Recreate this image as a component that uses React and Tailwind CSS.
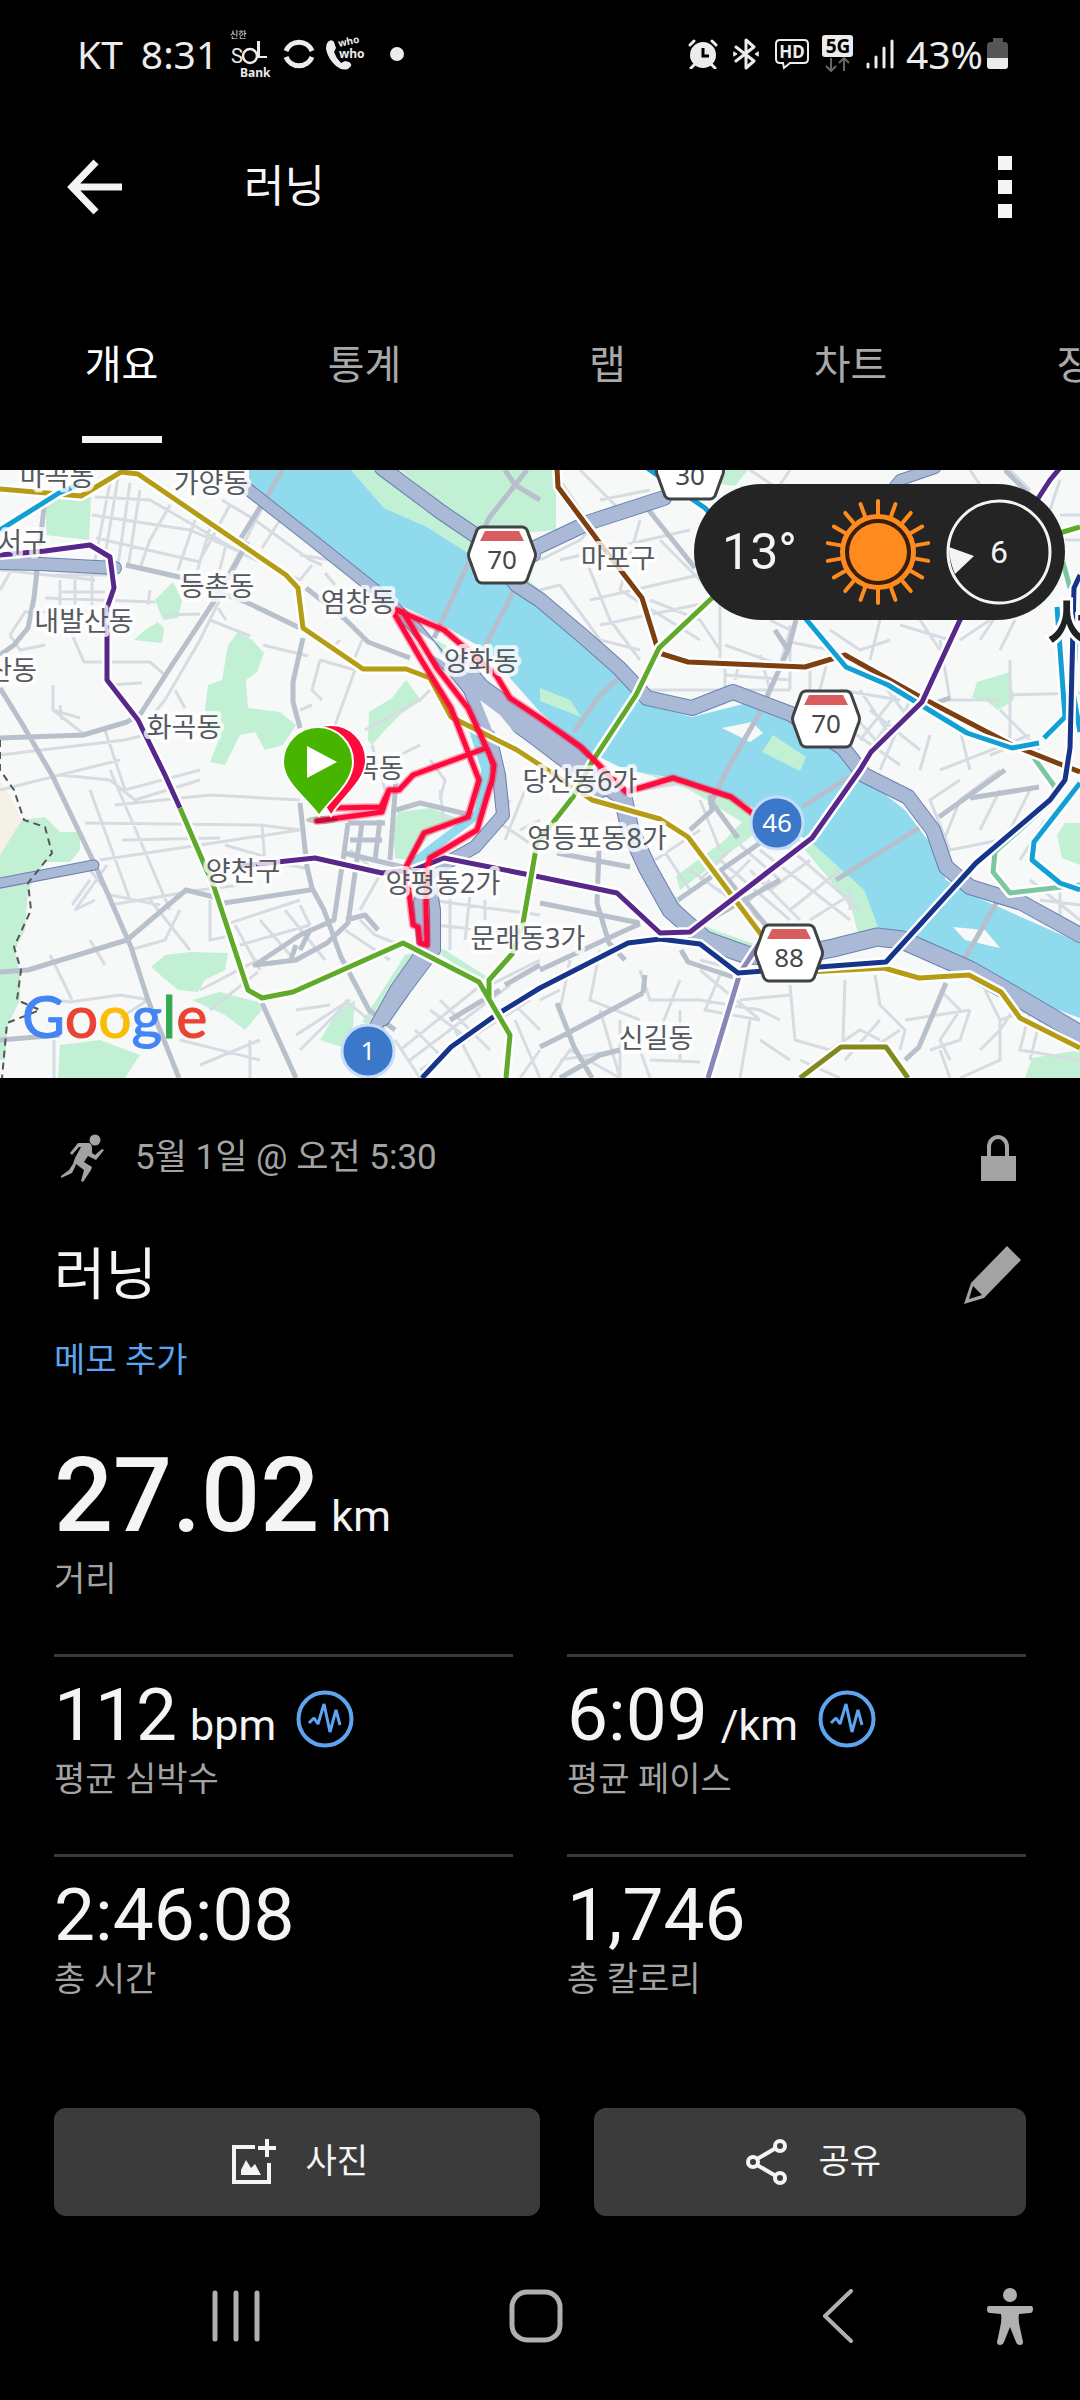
import { useState } from 'react'

const TABS = ['개요', '통계', '랩', '차트', '장비']

const STATS = [
  { value: '112', unit: 'bpm', label: '평균 심박수', chart: true },
  { value: '6:09', unit: '/km', label: '평균 페이스', chart: true },
  { value: '2:46:08', label: '총 시간' },
  { value: '1,746', label: '총 칼로리' },
]

/* ---------- map data ---------- */

const PARKS = [
  'M351 470L384 508L427 527L468 553L540 608V590L475 535L382 470Z',
  'M400 470H556V530L500 535L475 530Z',
  'M46 497H91L89 540L46 535Z',
  'M155 600L173 582L182 600L178 618L163 620Z',
  'M134 640L145 630L158 622L164 628L162 643Z',
  'M238 632L252 640L264 653L257 672L246 680L248 708L280 712L296 725L283 745L265 750L255 732L240 735L225 765L210 762L218 742L205 710L208 685L222 680L228 645Z',
  'M406 680L421 700L400 715L385 730L372 745L368 740L369 712L392 698Z',
  'M0 855L22 820L45 817L60 832H80V850L70 862H45L28 890L25 930L15 950L20 975V1000L8 1025L5 1060H0Z',
  'M151 967L165 955L190 952L228 953L225 970L205 980L198 992L178 990Z',
  'M192 1000L220 992L258 1002L262 1010L245 1030L225 1015Z',
  'M58 1078L60 1045L100 1040L140 1055L125 1078Z',
  'M355 1000L335 1015L320 1040L345 1048L352 1040Z',
  'M398 812L430 808L462 820L430 835L410 860L395 858L393 830Z',
  'M405 955L425 950L385 1030L362 1022Z',
  'M427 945L445 950L489 978L480 982Z',
  'M640 772L700 785L750 806L752 836L680 890L676 876L725 840L742 822L690 790Z',
  'M795 838L812 843L864 890L879 930L858 934L852 910L830 880Z',
  'M675 895L690 920L720 932L757 945L745 952L700 937L680 920Z',
  'M436 640L450 648L452 670L440 660Z',
  'M1025 1078L1032 1058L1080 1050V1078Z',
  'M1080 823H1065L1057 835L1062 858L1080 865Z',
  'M977 682L1010 672L1014 700L998 710L985 700L972 698Z',
  'M722 470H748L735 486L720 484Z',
]

const RIVER =
  'M249 470H351L384 508L427 527L468 553L540 608L609 665L640 703L692 717L747 703L791 722L840 748L860 775L905 810L933 847L946 880L967 893L1080 943V1018L970 977L902 937L879 930L864 890L812 843L750 806L733 797L667 777L626 770L585 750L540 712L510 678L482 648L448 628L406 608L375 592L310 540L249 492Z'

const ISLANDS = [
  { d: 'M540 688L570 700L581 717L540 701Z', fill: '#c2f0d4' },
  { d: 'M773 735L806 757L800 771L762 752Z', fill: '#c2f0d4' },
  { d: 'M722 728L752 722L763 733L750 742Z', fill: '#f7f8f8' },
  { d: 'M953 927L985 930L1000 948L965 940Z', fill: '#f7f8f8' },
]

const STREETS = [
  'M110 483L95 560M118 478L104 562M130 483L118 565M140 490L128 568M92 515L190 530L240 552M96 538L200 562M95 497L150 500M170 505L150 540L140 568M195 520L178 570M210 528L196 575',
  'M222 500L255 520L310 560L322 565M230 505L200 560M262 508L215 600M280 520L262 548M312 565L300 580M300 555L330 560M150 500L245 555L300 580',
  'M55 575H110M60 580V605M75 580V605M45 598L155 602M62 592H105M92 575V605M0 570L95 580M150 590L148 605M20 555L0 590',
  'M10 635L25 612H90M10 635L20 650L45 645M70 630L84 662L150 662L165 675M53 685V710L85 735M53 710L80 718M107 685L142 683M165 615L200 614',
  'M210 620L250 636M175 690L185 708M263 645L308 656M248 542L200 640L165 700L150 718M218 608L226 620M226 545L212 600',
  'M320 660L355 670L335 725L330 760M320 660L312 690L322 700M325 573L335 585M340 640L330 650M362 640L352 665M300 710L312 705M365 730L420 700L430 690',
  'M0 755L125 740L145 735M40 780L120 760M105 730L125 790L200 770M60 705L62 720M300 745L350 780L370 770M370 770L420 745M372 745L385 790',
  'M0 790L60 775L110 780L135 800L200 780M115 805L210 795L300 800M85 823L260 825L300 830M100 860L200 845L300 830M110 770L170 910M90 790L130 900M122 840L220 838M262 825L265 862M262 862L310 868M225 845L310 870',
  'M90 870L110 895L160 905M55 1000L70 1002L120 995L150 1000M50 955L60 975L72 1000M90 940L105 965M72 905L90 880M130 950L165 940L180 910M150 900L190 950M107 865L75 910L95 900M110 905L200 890L240 885M210 900V940L235 935',
  'M224 925L300 900M235 925L260 970M260 920L290 955M285 910L325 960M240 945L310 925M310 925L300 905M345 930L390 960M360 920L375 935L400 945M350 850L380 875L360 910M258 960L200 990M258 972L210 1010',
  'M296 1035L350 1000M296 1010L330 1005M300 1050L330 1020L350 1000M180 1040L260 1060M200 1065L260 1040M250 1040V1078M54 1040V1078M148 1000L120 1018M345 1000L375 1025',
  'M400 1050L500 970M410 1060L510 985M420 1070L530 1000M430 1010L470 1040M440 1000L490 1050M395 1040L420 1078M455 1030L480 1078M510 1000L540 1030M515 1020L540 1078M520 1078L540 1050M480 990L540 960M415 1030L445 1060',
  'M430 900L540 915M435 925L530 935M450 890V950M470 895L465 940M485 900V920M495 820L540 850M510 800L495 830M525 790L505 840M520 830L540 820M440 790L445 830M430 760L445 780L440 800',
  'M560 480L600 540M580 470L620 510L700 490M600 500L650 490M540 590L560 585L600 640L640 650M580 545L610 620L640 660M560 560L690 530M590 600L720 570M600 625L720 600M660 540L720 600M640 520L620 590L700 640M720 600V660M650 600L700 620L720 650M540 560L580 540L600 520',
  'M770 620L790 630L780 665M790 625V690M725 675L790 680M725 665V690M760 655L770 690M740 660L735 680M810 660V700M640 690L790 690M780 640L830 650L820 690M725 645L780 665',
  'M830 630L860 650L890 640M880 620L870 660M900 625L950 640M920 620L940 650M940 640L950 700L1000 700M1010 660V750M1010 695L1080 693M960 640L990 620M900 690L860 740M880 680L910 720M870 710L920 750M850 730L900 765M890 720L870 750M910 700L880 770M840 690L900 700M930 735L920 770M960 730L970 770M860 690L890 735M840 700L880 745',
  'M980 640L1000 610L1050 590M1000 710L1040 750M990 755L1030 740M940 770L1030 735M1010 470L1030 490M970 470L990 500M750 470L780 490M790 470L770 500M1060 480L1050 510M1060 515H1080M1065 540H1080M1015 620L1000 650',
  'M640 790L700 780M700 800L720 850M650 830L690 890M655 860L700 830M690 870L760 920M700 880L730 850M720 890L750 860M740 910L770 880M760 850L850 920M780 840L860 910M750 870L800 920M770 890L810 860M790 910L840 870M810 920L850 895M720 860L790 920M740 845L780 880M850 890V910',
  'M700 960L780 980M700 970L760 1020M720 975L705 1010L760 1020M740 1000L790 995M790 985L795 1040L830 1050M845 980L843 1040M875 975L880 1005L905 1030L900 1050M905 1020L970 1010M900 1030L870 1050M880 1020L845 1060M940 990L960 1010L940 1040L950 1060M985 990L1000 1020M970 1010L960 1040L930 1050',
  'M540 1000L560 990M570 960L560 1010M600 950L590 1000L640 1020M640 970L650 1000L700 1000M680 980L660 1030M560 1060L620 1050M600 1010L620 1078M620 1020V1078M640 1050L650 1078M680 1010V1060M650 1060L700 1062M550 1078L570 1050L620 1078M700 1000L760 1010L780 1020M750 1020L740 1078M760 1040L790 1060',
  'M830 1050L860 1030L880 1040M800 1060L840 1078M940 1050L950 1078M1000 1020L1030 1010L1020 1050L1080 1060M1000 1020V1060L960 1078M1020 1000L1000 1030L980 1050M1040 1020L1030 1060M1000 770L960 800L940 850M960 780L930 800L950 850L1000 840M1000 790L980 830M1030 790L1010 830M1045 820L1020 860M1030 880L1080 920M1060 890V915M1040 900L1080 905',
]

const ROADS = [
  'M0 738L83 735L127 722L141 713L172 665L213 603L248 542',
  'M126 565L179 577L248 603L300 628M303 638L293 682V702L300 728',
  'M300 803L307 867L312 888L324 910L341 957L369 1010L395 1030',
  'M0 688L21 722L52 775L96 867L131 947L148 1000L179 1078',
  'M0 972L28 970L127 940L186 890L214 897M224 903L310 890L312 888',
  'M348 823L344 853L334 920L300 935L255 965L296 960L327 943L348 923L362 823',
  'M310 930L300 950M296 945L290 962M344 853L403 867M396 780L390 860M380 820L375 860M348 823H385M350 840H382',
  'M396 810L420 803L479 817M262 1003L296 1078M346 920L365 915L378 930',
  'M45 498L34 598L28 628L14 645L0 655M0 1040L60 1035',
  'M306 588L344 618L368 642L410 658',
  'M505 470L515 485L540 500M1005 470L1035 500',
  'M647 508L695 568M540 970L626 930L640 924M540 903L640 923M557 853L630 867M599 850L597 903L609 943L625 960',
  'M540 1047L568 1033L643 993M557 1003L574 1047L592 1078M560 1078L600 1055L620 1050M643 993L645 975',
  'M946 983L919 1047L905 1060M681 950L688 962L733 977',
  'M678 900L760 843M700 925L780 880M720 870L770 930M1005 770L967 797L939 817M970 798L1039 787M710 800L738 838M690 830L712 810L710 795',
  'M935 703L950 698M505 985L540 965M450 1020L500 990',
]

const BRIDGES = [
  'M527 470L489 518L434 638', 'M517 585L482 652', 'M282 470L272 488L241 538', 'M796 620L788 650L760 712L726 772L710 805',
  'M619 678L600 695L574 732', 'M860 770L802 807', 'M919 828L836 880', 'M998 900L964 960', 'M775 630L788 650',
]

const HIGHWAYS = [
  { d: 'M245 487L310 538L375 590L413 625L444 662L478 690', w: 11 },
  { d: 'M460 668L478 690L540 735L570 758L600 785', w: 24 },
  { d: 'M600 780L623 797L630 830L647 867L671 910L705 940L747 955L789 957L833 948L877 937L902 940L970 970L1005 990L1080 1034', w: 17 },
  { d: 'M382 468L441 512L475 535L517 585L540 600L585 638L619 668L647 698L692 708L733 692L791 714L843 748L864 775L908 797L933 830L946 867L970 887L1022 903L1080 935', w: 14 },
  { d: 'M535 548L590 522L664 498', w: 14 },
  { d: 'M534 555L520 562', w: 12 },
  { d: 'M890 492L900 480L935 468', w: 10 },
  { d: 'M466 680L479 712L492 745L499 775L503 815L475 847L430 872L420 903L424 950L396 990L374 1030', w: 12 },
  { d: 'M430 880L435 910V950L405 990L384 1020', w: 10 },
  { d: 'M-5 563L40 564L115 568', w: 12 },
  { d: 'M-5 884L94 865', w: 9 },
]

const METRO = [
  { c: '#8a86b8', d: 'M768 930L740 973L708 1078' },
  { c: '#7cc6a0', d: 'M1034 758L1055 787L1050 803L995 852L993 872L1010 893L1080 885M1063 562L1070 588' },
  { c: '#b49c14', d: 'M0 489L81 496L121 472L138 474L286 575L298 588L303 628L363 669H406L430 678L451 717L517 750L540 765L592 800L660 819L688 837L760 933L789 973L884 968L919 978L969 975L1001 992L1020 1018L1080 1048' },
  { c: '#838a1c', d: 'M800 1078L841 1047H886L908 1078' },
  { c: '#7d3f10', d: 'M557 468L558 487L599 542L642 598L659 653L688 662L805 667L845 655L922 698L1012 745L1080 772' },
  { c: '#119fd6', d: 'M0 530L59 493L80 484M647 468L705 508L805 618L846 667L888 685L967 733L1012 748L1039 743M1044 738L1065 717L1057 607M1076 638L1073 692L1080 732M1080 783L1034 842L1032 860L1060 883L1080 890' },
  { c: '#15348a', d: 'M422 1078L451 1047L496 1015L540 988L628 943L660 939L700 944L738 973L886 962L976 863L1050 800L1065 780L1070 748L1074 588L1080 575' },
  { c: '#57278a', d: 'M0 555L45 551L90 545L110 557L114 588L107 608V680L138 720L165 775L180 808M240 866L315 858L382 873L413 870L444 858L540 877L617 893L660 933L690 932L812 838L860 770L871 752L922 702L960 620L1039 497L1050 480L1060 468' },
  { c: '#5faa2a', d: 'M180 808L214 887L248 990L262 998L293 992L403 943L479 982L510 1035L506 1078M489 1000V980L513 953L523 923L537 843L573 797L592 762L636 695L659 648L712 598L1063 532L1080 527' },
]

const ROUTE =
  'M317 821L382 812L389 790H399L413 775L486 748L482 738L468 708L437 668L403 612L396 610L444 630L465 648L496 675L510 698L540 718L581 747L626 792L673 778L731 797L756 816M394 613L420 658L451 708L477 775L479 780L468 817L424 833L406 867L413 925L418 927L420 943L427 945L426 903L427 867L430 858L477 830L492 780L494 765L482 738M334 808L381 807L389 790'

const LABELS = [
  { t: '마곡동', x: 57, y: 486 }, { t: '가양동', x: 211, y: 493 }, { t: '서구', x: 22, y: 552 },
  { t: '등촌동', x: 217, y: 596 }, { t: '내발산동', x: 84, y: 631 }, { t: '산동', x: 12, y: 680 },
  { t: '염창동', x: 358, y: 612 }, { t: '양화동', x: 481, y: 671 }, { t: '화곡동', x: 184, y: 737 },
  { t: '목동', x: 379, y: 778 }, { t: '양천구', x: 243, y: 881 }, { t: '양평동2가', x: 443, y: 893 },
  { t: '문래동3가', x: 528, y: 948 }, { t: '당산동6가', x: 580, y: 791 }, { t: '영등포동8가', x: 597, y: 848 },
  { t: '신길동', x: 656, y: 1048 }, { t: '마포구', x: 618, y: 568 },
]

const SHIELDS = [
  { n: 30, x: 690, y: 471 }, { n: 70, x: 502, y: 555 }, { n: 70, x: 826, y: 719 }, { n: 88, x: 789, y: 953 },
]

const GOOGLE = [
  ['G', '#4285f4'], ['o', '#ea4335'], ['o', '#fbbc05'], ['g', '#4285f4'], ['l', '#34a853'], ['e', '#ea4335'],
]

function RouteMap() {
  return (
    <svg viewBox="0 470 1080 608" className="block w-full" role="img" aria-label="지도">
      <rect y="470" width="1080" height="608" fill="#f7f8f8" />
      <path d="M0 780L12 800L27 830L15 850L0 860Z" fill="#f6f1e6" />
      <path d={PARKS.join('')} fill="#c2f0d4" />
      <path d={STREETS.join('')} fill="none" stroke="#d7dce3" strokeWidth="3" />
      <path d={ROADS.join('')} fill="none" stroke="#b8c0cc" strokeWidth="5" strokeLinejoin="round" />
      <path d={RIVER} fill="#90daee" />
      {ISLANDS.map((s) => <path key={s.d} d={s.d} fill={s.fill} />)}
      <path d="M472 725L486 770L479 813L434 847L410 866" fill="none" stroke="#90daee" strokeWidth="9" />
      <path d={BRIDGES.join('')} fill="none" stroke="#b6bfcb" strokeWidth="5" />
      {HIGHWAYS.map((h) => (
        <path key={h.d} d={h.d} fill="none" stroke="#6b80b0" strokeWidth={h.w + 2} strokeLinecap="round" strokeLinejoin="round" />
      ))}
      {HIGHWAYS.map((h) => (
        <path key={h.d} d={h.d} fill="none" stroke="#a9b9d6" strokeWidth={h.w} strokeLinecap="round" strokeLinejoin="round" />
      ))}
      <path d="M480 700L492 730L530 752L500 715Z" fill="#f7f8f8" />
      <path d="M414 628L432 655L448 664L434 642Z" fill="#f7f8f8" />
      <path d="M0 740V770L14 790L24 820L45 827L52 853L28 883L31 910L14 947L21 970L17 1000L40 1010L7 1023L2 1078" fill="none" stroke="#555" strokeWidth="2" strokeDasharray="7 5" />

      {METRO.map((m) => (
        <g key={m.c} fill="none" strokeLinejoin="round">
          <path d={m.d} stroke="#fff" strokeWidth="10" />
          <path d={m.d} stroke={m.c} strokeWidth="5" />
        </g>
      ))}

      <g fill="none" strokeLinejoin="round" strokeLinecap="round">
        <path d={ROUTE} stroke="#ff0a3c" strokeOpacity=".35" strokeWidth="8" />
        <path d={ROUTE} stroke="#ff0a3c" strokeWidth="5" />
      </g>

      <g className="font-['Noto_Sans','Noto_Sans_CJK_KR',sans-serif]" textAnchor="middle">
        {LABELS.map((l) => (
          <text key={l.t} x={l.x} y={l.y} fontSize="27" fill="#55595f" stroke="#fff" strokeOpacity=".8" strokeWidth="8" strokeLinejoin="round" paintOrder="stroke">
            {l.t}
          </text>
        ))}
        <text x="1046" y="649" fontSize="64" fontWeight="500" textAnchor="start" fill="#202124" stroke="#fff" strokeWidth="6" paintOrder="stroke">서울</text>
        {SHIELDS.map((s) => (
          <g key={`${s.x}-${s.y}`} transform={`translate(${s.x} ${s.y})`}>
            <path d="M-20-28H20Q23-28 25-25L33-3Q34 0 33 3L25 25Q23 28 20 28H-20Q-23 28-25 25L-33 3Q-34 0-33-3L-25-25Q-23-28-20-28Z" fill="#fff" stroke="#3f4344" strokeWidth="3" />
            <path d="M-17-24H17L22-14H-22Z" fill="#d95c5e" />
            <text y="14" fontSize="26" fill="#44484c">{s.n}</text>
          </g>
        ))}
        {[{ n: 46, x: 777, y: 823 }, { n: 1, x: 368, y: 1051 }].map((c) => (
          <g key={c.n}>
            <circle cx={c.x} cy={c.y} r="26" fill="#3b78c9" stroke="#c6dcf8" strokeWidth="3" />
            <text x={c.x} y={c.y + 9} fontSize="26" fill="#fff">{c.n}</text>
          </g>
        ))}
      </g>

      <ellipse cx="322" cy="820" rx="16" ry="4" fill="#000" opacity=".2" />
      <path d="M331 816C323 798 296 782 296 760A35 35 0 0 1 366 760C366 782 341 798 331 816Z" fill="#ff0a3c" stroke="#fff" strokeWidth="2" />
      <path d="M319 816C309 800 283 784 283 762A35 35 0 0 1 353 762C353 784 329 800 319 816Z" fill="#47b400" stroke="#fff" strokeWidth="2" />
      <path d="M307 746V778L337 762Z" fill="#fff" />

      <text x="22" y="1038" fontSize="59" className="font-[Lato,sans-serif]" strokeWidth="1" aria-label="Google">
        {GOOGLE.map(([ch, color], i) => <tspan key={i} fill={color} stroke={color}>{ch}</tspan>)}
      </text>
    </svg>
  )
}

function Weather() {
  const rays = Array.from({ length: 18 }, (_, i) => i * 20)
  return (
    <div className="absolute top-[14px] right-[15px] flex h-[136px] items-center rounded-full bg-[#242424] pr-3 pl-7">
      <span className="text-[50px] leading-none text-[#f4f4f4]">13°</span>
      <svg viewBox="-53 -53 106 106" className="ml-7 w-[106px]" stroke="#ff8a1e" strokeLinecap="round">
        {rays.map((a) => <path key={a} d="M0-38V-51" strokeWidth="4" transform={`rotate(${a})`} />)}
        <circle r="35.5" fill="none" strokeWidth="5" />
        <circle r="31" fill="none" stroke="#3a1f05" strokeWidth="3" />
        <circle r="29" fill="#ff8a1e" stroke="none" />
      </svg>
      <div className="relative ml-[14px] flex size-[108px] items-center justify-center">
        <svg viewBox="-54 -54 108 108" className="absolute inset-0">
          <circle r="51" fill="none" stroke="#f4f4f4" strokeWidth="3" />
          <path d="M-50-5L-25 4L-44 22Q-50 8-50-5Z" fill="#f4f4f4" />
        </svg>
        <span className="text-[32px] leading-none text-[#f4f4f4]">6</span>
      </div>
    </div>
  )
}

function StatusBar() {
  return (
    <div className="flex h-28 items-center justify-between pr-[71px] pb-1 pl-[77px] font-['Noto_Sans','Noto_Sans_CJK_KR',sans-serif] text-[39px] text-[#ececec]">
      <div className="flex items-center">
        <span>KT</span>
        <span className="ml-[18px]">8:31</span>
        <svg viewBox="0 0 40 50" className="ml-3 h-[50px] w-10 overflow-visible" fill="currentColor">
          <text x="0" y="9" fontSize="9">신한</text>
          <text x="1" y="34" fontSize="20" className="font-[Roboto,sans-serif]">S</text>
          <circle cx="20" cy="27" r="7" fill="none" stroke="currentColor" strokeWidth="2.5" />
          <path d="M27 12H30V27H37V29H27Z" />
          <text x="10" y="48" fontSize="12" fontWeight="700">Bank</text>
        </svg>
        <svg viewBox="0 0 34 34" className="ml-3 size-[34px]" fill="none" stroke="currentColor" strokeWidth="5">
          <path d="M4 14A14 14 0 0 1 30 14M4 20A14 14 0 0 0 30 20" />
        </svg>
        <svg viewBox="0 0 42 36" className="ml-2 h-9 w-[42px] overflow-visible" fill="currentColor">
          <path d="M5 5Q2 7 2 13Q4 23 12 30Q18 35 24 33L27 30Q28 28 25 26L21 25L17 27Q12 22 10 16L12 12L10 6Q8 3 5 5Z" />
          <text x="15" y="11" fontSize="10" fontWeight="700" transform="rotate(-12 15 11)">who</text>
          <text x="15" y="22" fontSize="12" fontWeight="700">who</text>
        </svg>
        <span className="ml-6 size-[14px] rounded-full bg-[#ececec]" />
      </div>
      <div className="flex items-center">
        <svg viewBox="0 0 30 30" className="size-[30px]" fill="currentColor">
          <circle cx="15" cy="16" r="13" />
          <path d="M2 6L6 2M28 6L24 2M6 26L3 29M24 26L27 29" stroke="currentColor" strokeWidth="3" strokeLinecap="round" />
          <path d="M15 9V17H21" fill="none" stroke="#000" strokeWidth="3" />
        </svg>
        <svg viewBox="0 0 28 32" className="ml-[14px] h-8 w-7" fill="none" stroke="currentColor" strokeWidth="3" strokeLinejoin="round" strokeLinecap="round">
          <path d="M4 9L22 23L14 30V2L22 9L4 23" />
          <path d="M2 14L5 16L2 18ZM26 14L23 16L26 18Z" strokeWidth="1" fill="currentColor" />
        </svg>
        <svg viewBox="0 0 36 32" className="ml-[14px] h-8 w-9" fill="none" stroke="currentColor" strokeWidth="2">
          <path d="M6 2H30Q34 2 34 6V21Q34 25 30 25H16L10 30L9 25H6Q2 25 2 21V6Q2 2 6 2Z" />
          <text x="18" y="20" fontSize="17" fontWeight="700" textAnchor="middle" fill="currentColor" stroke="none">HD</text>
        </svg>
        <svg viewBox="0 0 32 42" className="ml-3 h-[42px] w-8">
          <rect x="0" y="2" width="31" height="22" rx="3" fill="currentColor" />
          <text x="16" y="20" fontSize="19" fontWeight="700" textAnchor="middle" fill="#000">5G</text>
          <path d="M9 25V37M4 33L9 38L14 33M22 38V26M17 30L22 25L27 30" fill="none" stroke="#666" strokeWidth="2" />
        </svg>
        <svg viewBox="0 0 28 32" className="ml-3 h-8 w-7" stroke="currentColor" strokeWidth="3" strokeLinecap="round">
          <path d="M2 26V29M10 19V29M18 10V29M26 3V29" />
        </svg>
        <span className="ml-3">43%</span>
        <svg viewBox="0 0 22 32" className="ml-1 h-8 w-[22px]">
          <path d="M6 0H16V4H18Q21 4 21 8V21H0V8Q0 4 4 4H6Z" fill="#555" />
          <path d="M0 20H21V28Q21 31 18 31H3Q0 31 0 28Z" fill="currentColor" />
        </svg>
      </div>
    </div>
  )
}

function PulseIcon() {
  return (
    <svg viewBox="0 0 58 58" className="mt-2 ml-5 size-[58px] self-center" fill="none" stroke="#5ca5f0" aria-hidden="true">
      <circle cx="29" cy="29" r="26.5" strokeWidth="4" />
      <path d="M13 33L18 28L22 34L28 14L34 42L40 20L44 35" strokeWidth="3" strokeLinejoin="bevel" />
    </svg>
  )
}

export default function App() {
  const [tab, setTab] = useState('개요')

  return (
    <div className="flex min-h-screen flex-col overflow-x-hidden bg-black font-[Roboto,'Noto_Sans_CJK_KR',sans-serif] text-[#f4f4f4]">
      <StatusBar />

      <header className="flex h-[150px] items-center pr-[55px] pl-[66px]">
        <button type="button" aria-label="뒤로" className="w-14">
          <svg viewBox="0 0 56 56" className="w-14" fill="none" stroke="currentColor" strokeWidth="7">
            <path d="M56 28H7M30 3L6 28L30 53" />
          </svg>
        </button>
        <h1 className="ml-[122px] flex-1 text-[44px]">러닝</h1>
        <button type="button" aria-label="더보기" className="flex w-10 flex-col items-center gap-[10px]">
          <span className="size-[14px] bg-[#f4f4f4]" />
          <span className="size-[14px] bg-[#f4f4f4]" />
          <span className="size-[14px] bg-[#f4f4f4]" />
        </button>
      </header>

      <nav className="flex h-[208px] overflow-hidden">
        {TABS.map((t) => (
          <button
            key={t}
            type="button"
            onClick={() => setTab(t)}
            className={`relative flex w-[22.5%] shrink-0 items-center justify-center text-[40px] ${t === tab ? 'text-white' : 'text-[#a8a8a8]'}`}
          >
            {t}
            {t === tab && <span className="absolute bottom-[27px] h-[7px] w-20 bg-[#f4f4f4]" />}
          </button>
        ))}
      </nav>

      <section className="relative">
        <RouteMap />
        <Weather />
      </section>

      <main className="flex-1 px-[54px]">
        <div className="flex h-40 items-center text-[35px] text-[#a3a3a3]">
          <svg viewBox="0 0 50 50" className="ml-1 size-[50px]" fill="currentColor" aria-hidden="true">
            <circle cx="37" cy="7" r="5.5" />
            <path d="M14 22L12 20L20 10H31Q34 11 34 15L34 20L37 22L44 16L46 17L38 27L30 23L26 29L34 34L33 37L25 49L23 48L26 37L18 31L17 34L14 40L3 45V43L11 37L15 31L17 25L23 14H21Z" />
          </svg>
          <span className="ml-[27px] flex-1">5월 1일 @ 오전 5:30</span>
          <svg viewBox="0 0 56 56" className="size-14" aria-label="비공개">
            <path d="M19 28V17A9 10 0 0 1 37 17V28" fill="none" stroke="currentColor" strokeWidth="4" />
            <rect x="11" y="26" width="35" height="25" fill="currentColor" />
          </svg>
        </div>

        <div className="flex h-[74px] items-center justify-between">
          <h2 className="text-[56px]">러닝</h2>
          <button type="button" aria-label="편집" className="mr-1 text-[#a3a3a3]">
            <svg viewBox="0 0 58 58" className="size-[58px]" fill="currentColor">
              <path d="M43 0L57 14L20 52L0 58L7 37Z" />
              <path d="M9 40L18 49L5 53Z" fill="#000" />
            </svg>
          </button>
        </div>
        <a href="#memo" className="mt-7 block w-fit text-[34px] leading-10 text-[#5ca5f0]">메모 추가</a>

        <div className="mt-16 flex items-baseline gap-3">
          <span className="text-[104px] leading-[104px] font-medium">27.02</span>
          <span className="text-[43px]">km</span>
        </div>
        <p className="mt-[10px] text-[34px] leading-10 text-[#a3a3a3]">거리</p>

        <div className="mt-[55px] grid grid-cols-2 gap-x-[54px]">
          {STATS.map((s) => (
            <div key={s.label} className="border-t-3 border-[#3a3a3a] pt-[22px] pb-[55px]">
              <div className="flex h-[72px] items-baseline">
                <span className="text-[73px] leading-[72px]">{s.value}</span>
                {s.unit && <span className="ml-[13px] text-[43px] leading-[72px]">{s.unit}</span>}
                {s.chart && <PulseIcon />}
              </div>
              <p className="mt-2 text-[34px] leading-10 text-[#a3a3a3]">{s.label}</p>
            </div>
          ))}
        </div>

        <div className="mt-[54px] flex gap-[54px] text-[34px]">
          <button type="button" className="flex h-[108px] flex-[9] items-center justify-center gap-7 rounded-xl bg-[#3b3b3b] pl-1">
            <svg viewBox="0 0 48 48" className="size-12" fill="none" stroke="currentColor" strokeWidth="4">
              <path d="M25 9H4V44H39V25" />
              <path d="M37 1V19M28 10H46" />
              <path d="M11 37V32L16 22L21 30L25 26L31 37Z" fill="currentColor" stroke="none" />
            </svg>
            사진
          </button>
          <button type="button" className="flex h-[108px] flex-[8] items-center justify-center gap-7 rounded-xl bg-[#3b3b3b] pl-1">
            <svg viewBox="0 0 48 48" className="size-12" fill="none" stroke="currentColor" strokeWidth="4">
              <circle cx="10" cy="24" r="5" />
              <circle cx="37" cy="8" r="5" />
              <circle cx="37" cy="40" r="5" />
              <path d="M14 21L33 10M14 27L33 38" />
            </svg>
            공유
          </button>
        </div>
      </main>

      <footer className="flex h-[168px] items-center pr-[45px] pl-[86px] text-[#b0b0b0]">
        <button type="button" aria-label="최근 앱" className="flex flex-1 justify-center">
          <svg viewBox="0 0 54 54" className="size-[54px]" stroke="currentColor" strokeWidth="5" strokeLinecap="round">
            <path d="M6 4V50M27 4V50M48 4V50" />
          </svg>
        </button>
        <button type="button" aria-label="홈" className="flex flex-1 justify-center">
          <svg viewBox="0 0 54 54" className="size-[54px]" fill="none" stroke="currentColor" strokeWidth="5">
            <rect x="3" y="3" width="48" height="48" rx="15" />
          </svg>
        </button>
        <button type="button" aria-label="뒤로 가기" className="flex flex-1 justify-center">
          <svg viewBox="0 0 54 54" className="size-[54px]" fill="none" stroke="currentColor" strokeWidth="4" strokeLinecap="round" strokeLinejoin="round">
            <path d="M43 2L17 27L43 52" />
          </svg>
        </button>
        <button type="button" aria-label="접근성" className="w-[50px]">
          <svg viewBox="0 0 50 60" className="h-[60px] w-[50px]" fill="currentColor">
            <circle cx="25" cy="9" r="7" />
            <path d="M4 20H46Q48 20 48 23Q48 27 45 27L34 28Q33 34 35 42L38 56Q38 59 35 59Q32 59 31 56L25 41L19 56Q18 59 15 59Q12 59 12 56L15 42Q17 34 16 28L5 27Q2 27 2 23Q2 20 4 20Z" />
          </svg>
        </button>
      </footer>
    </div>
  )
}
